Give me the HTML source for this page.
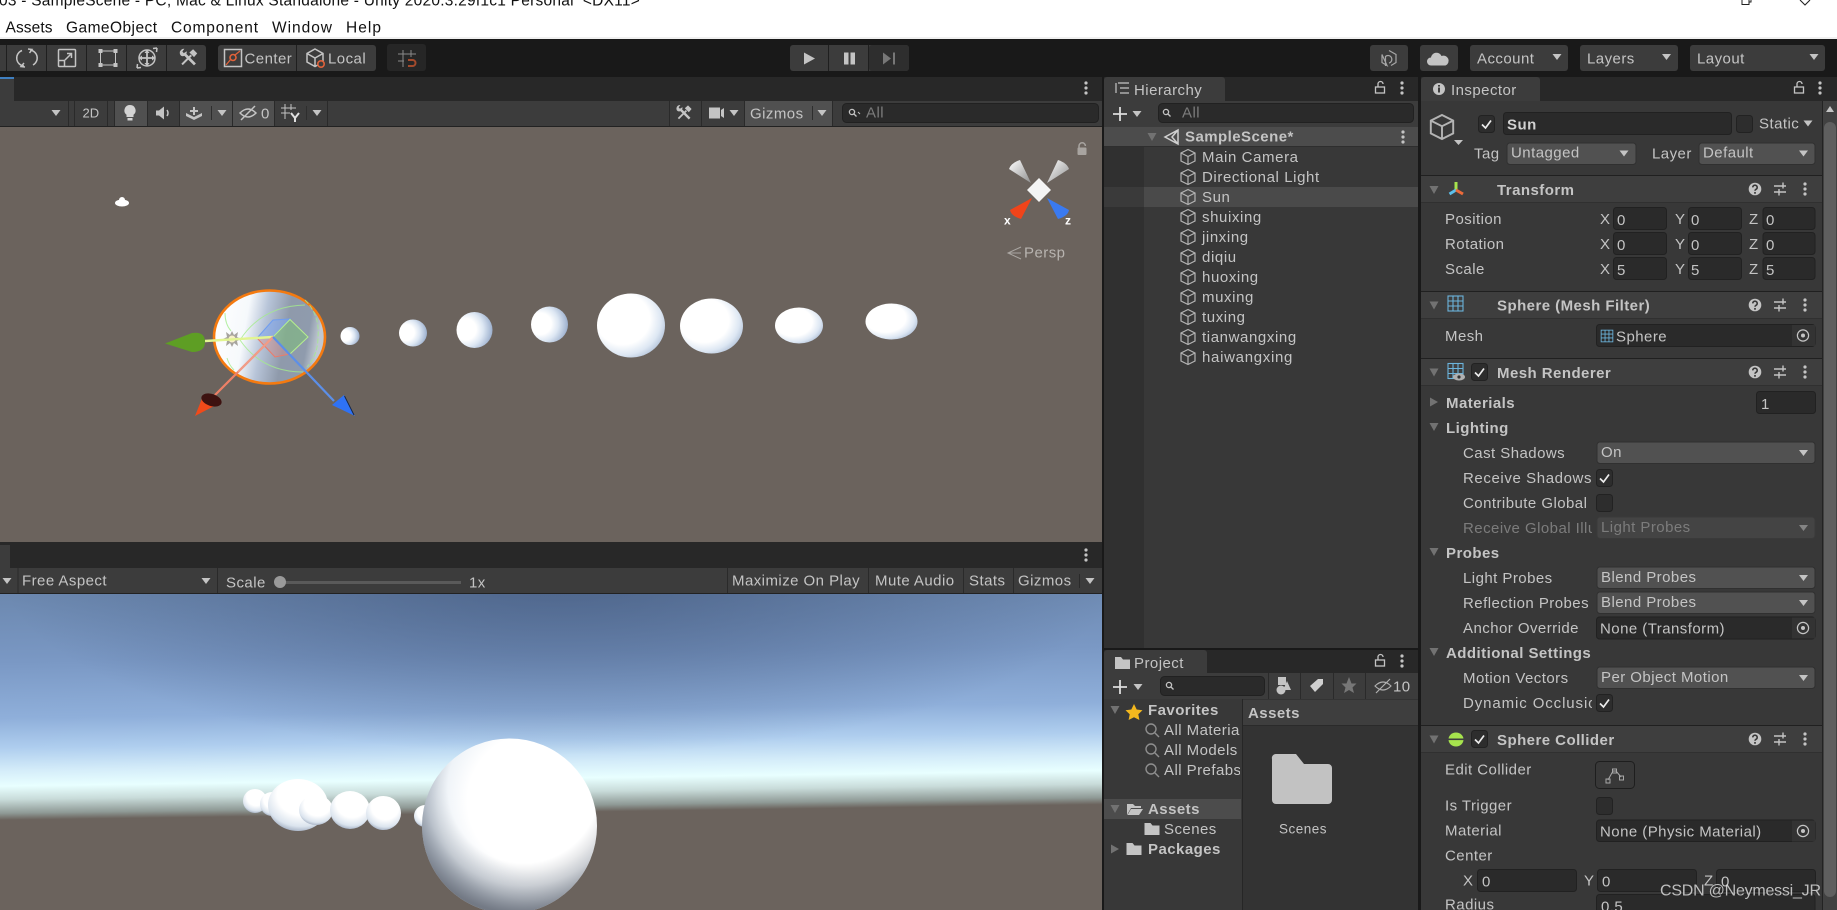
<!DOCTYPE html>
<html><head><meta charset="utf-8"><title>Unity</title>
<style>
html,body{margin:0;padding:0;background:#191919;overflow:hidden;width:1837px;height:910px}
svg{display:block;position:absolute;left:0;top:0}
text{font-family:"Liberation Sans",sans-serif;font-size:15px;letter-spacing:.45px;fill:#c4c4c4;white-space:pre;transform:translateY(-.5px)}
.b{font-weight:bold}
.dim{fill:#7c7c7c}
.blk{fill:#111;letter-spacing:0;font-size:15.5px}
.f{fill:#2a2a2a;stroke:#212121}
.d{fill:#515151;stroke:#303030}
.s{fill:none;stroke:#c4c4c4;stroke-width:1.5}
.sep{fill:#262626}
</style></head><body>
<svg width="1837" height="910" viewBox="0 0 1837 910" xmlns="http://www.w3.org/2000/svg">
<defs>
<clipPath id="lab"><rect x="1400" y="380" width="192" height="340"/></clipPath>
<clipPath id="lc"><rect x="1104" y="700" width="136" height="90"/></clipPath>
<linearGradient id="sky" gradientUnits="userSpaceOnUse" x1="0" y1="594" x2="3.2" y2="820">
<stop offset="0" stop-color="#6c88af"/><stop offset=".3" stop-color="#7a98c4"/><stop offset=".55" stop-color="#8fafda"/><stop offset=".68" stop-color="#aecdee"/><stop offset=".78" stop-color="#d4ecf9"/><stop offset=".85" stop-color="#e8ffff"/><stop offset=".91" stop-color="#c8dbd9"/><stop offset=".97" stop-color="#8f9a96"/><stop offset="1" stop-color="#6b635d"/>
</linearGradient>
<radialGradient id="dark" gradientUnits="userSpaceOnUse" cx="560" cy="570" r="560" gradientTransform="translate(560 570) scale(1 .33) translate(-560 -570)">
<stop offset="0" stop-color="#3e5378" stop-opacity=".7"/><stop offset="1" stop-color="#3e5378" stop-opacity="0"/>
</radialGradient>
<radialGradient id="big" cx=".65" cy=".36" r=".78">
<stop offset="0" stop-color="#fff"/><stop offset=".5" stop-color="#fff"/><stop offset=".72" stop-color="#eaf0f6"/><stop offset=".88" stop-color="#c4d0de"/><stop offset="1" stop-color="#98a4b4"/>
</radialGradient>
<radialGradient id="bigb" cx=".58" cy=".28" r=".72">
<stop offset=".6" stop-color="#6f7580" stop-opacity="0"/><stop offset=".78" stop-color="#6f7580" stop-opacity=".32"/><stop offset="1" stop-color="#6f7580" stop-opacity=".95"/>
</radialGradient>
<radialGradient id="gs" cx=".55" cy=".3" r=".72">
<stop offset="0" stop-color="#fff"/><stop offset=".55" stop-color="#fff"/><stop offset=".85" stop-color="#dbe4ee"/><stop offset="1" stop-color="#a3afc2"/>
</radialGradient>
<radialGradient id="ss" cx=".25" cy=".48" r=".85">
<stop offset="0" stop-color="#fff"/><stop offset=".35" stop-color="#fff"/><stop offset=".58" stop-color="#dde7f3"/><stop offset=".8" stop-color="#aebfd8"/><stop offset="1" stop-color="#7f96bb"/>
</radialGradient>
<radialGradient id="sl2" cx=".38" cy=".4" r=".72">
<stop offset="0" stop-color="#fff"/><stop offset=".55" stop-color="#fff"/><stop offset=".78" stop-color="#dde7f3"/><stop offset="1" stop-color="#a4b6d0"/>
</radialGradient>
<linearGradient id="sun" x1="0" y1="0" x2="1" y2=".15">
<stop offset="0" stop-color="#fff"/><stop offset=".33" stop-color="#f6f9fc"/><stop offset=".5" stop-color="#b7c4d8"/><stop offset=".7" stop-color="#8f9aab"/><stop offset=".9" stop-color="#8f9bad"/><stop offset="1" stop-color="#c0c8d2"/>
</linearGradient>
<linearGradient id="cw" x1="0" y1="0" x2="1" y2="1"><stop offset="0" stop-color="#fff"/><stop offset="1" stop-color="#8f8f8f"/></linearGradient>
<g id="dn"><path d="M-4.5 -3H4.5L0 3Z" fill="#c4c4c4"/></g>
<g id="fo"><path d="M-4.5 -4H4.5L0 4Z" fill="#727272"/></g>
<g id="fr"><path d="M-4 -4.5L4 0L-4 4.5Z" fill="#727272"/></g>
<g id="dots" fill="#c4c4c4"><circle cy="-5" r="1.6"/><circle r="1.6"/><circle cy="5" r="1.6"/></g>
<g id="help"><circle r="6.3" fill="#c4c4c4"/><path d="M-2.2 -1.6a2.2 2.2 0 1 1 3.4 1.8c-.8.5-1.2.9-1.2 1.5" fill="none" stroke="#383838" stroke-width="1.6"/><circle cy="3.9" r="1" fill="#383838"/></g>
<g id="sl" fill="none" stroke="#c4c4c4" stroke-width="1.4"><path d="M-6 -3H6M3 -6.5V-.5M-6 3H6M-1 0V6.5"/></g>
<g id="hd"><use href="#help" x="0"/><use href="#sl" x="25"/><use href="#dots" x="50"/></g>
<g id="box"><rect x=".5" y=".5" width="16" height="17" rx="3" fill="#2d2d2d" stroke="#222"/></g>
<g id="chk"><use href="#box"/><path d="M4 9.5L7.5 13L13 5.5" fill="none" stroke="#ececec" stroke-width="1.7"/></g>
<g id="tg"><rect x="-11" y="-10.5" width="23" height="21" fill="#333"/><circle r="5.6" fill="none" stroke="#c4c4c4" stroke-width="1.2"/><circle r="2" fill="#c4c4c4"/></g>
<g id="lock" fill="none" stroke="#c4c4c4" stroke-width="1.3"><rect x="-4.5" y="-1" width="9" height="6"/><path d="M-2 -1V-4a2.5 2.5 0 0 1 5 0"/></g>
<g id="cube" fill="none" stroke="#b4b4b4" stroke-width="1.2"><path d="M0 -7.5L7 -4V4L0 7.5L-7 4V-4ZM-7 -4L0 -.5L7 -4M0 -.5V7.5"/></g>
<g id="srch" fill="none" stroke="#c4c4c4" stroke-width="1.3"><circle cx="-1" cy="-1" r="2.6"/><path d="M1 1L3.5 3.5"/></g>
<g id="msrch" fill="none" stroke="#8e8e8e" stroke-width="1.4"><circle cx="-1" cy="-1" r="5"/><path d="M3 3L7 7"/></g>
<g id="grid" fill="none" stroke="#6cb4dc" stroke-width="1.1"><rect x="-7.5" y="-7.5" width="15" height="15"/><path d="M-2.5 -7.5V7.5M2.5 -7.5V7.5M-7.5 -2.5H7.5M-7.5 2.5H7.5"/></g>
<g id="fld"><path d="M-7.5 -6H-1.5L.5 -3.5H7.5V6H-7.5Z" fill="#c4c4c4"/></g>
<g id="wr"><path d="M-5 -5L7 7" stroke="#c4c4c4" stroke-width="3" fill="none"/><path d="M-9.5 -5.5a4.5 4.5 0 0 1 5-4.5l-2.2 3 1.7 1.8 3-2.2a4.5 4.5 0 0 1-5 5.4a4 4 0 0 1-2.5-3.5Z" fill="#c4c4c4"/><path d="M-7 7L3 -3" stroke="#c4c4c4" stroke-width="2.2" fill="none"/><path d="M1 -6L5 -9.5L9.5 -5L6 -1Z" fill="#c4c4c4"/></g>
</defs>

<!-- window chrome -->
<rect width="1837" height="38" fill="#fff"/><rect y="37" width="1837" height="2" fill="#f0f0f0"/>
<text x="-1" y="6" style="fill:#111;font-size:15.5px;letter-spacing:.2px" textLength="641" lengthAdjust="spacing">03 - SampleScene - PC, Mac &amp; Linux Standalone - Unity 2020.3.29f1c1 Personal  &lt;DX11&gt;</text>
<text x="5.5" y="33" class="blk" textLength="47" lengthAdjust="spacing">Assets</text><text x="66" y="33" class="blk" textLength="91" lengthAdjust="spacing">GameObject</text><text x="171" y="33" class="blk" textLength="87" lengthAdjust="spacing">Component</text><text x="272" y="33" class="blk" textLength="60" lengthAdjust="spacing">Window</text><text x="346" y="33" class="blk" textLength="35" lengthAdjust="spacing">Help</text>
<path d="M1742 0V4.5H1749V0M1749 2H1751V0" fill="none" stroke="#222" stroke-width="1"/><path d="M1800 0L1805 5L1810 0" fill="none" stroke="#222" stroke-width="1.1"/>

<!-- main toolbar -->
<rect y="39" width="1837" height="38" fill="#191919"/>
<rect x="-4" y="45" width="210" height="26" rx="3" fill="#3c3c3c"/>
<path d="M6.5 45V71M46.5 45V71M86.5 45V71M126.5 45V71M166.5 45V71" stroke="#1f1f1f"/>
<path d="M22 50.5A8 8 0 0 0 24 66M30 50A8 8 0 0 1 33 65M28 49L32 49.5L29.5 53M25 67L21 66.5L24 63" class="s"/>
<rect x="58.5" y="49.5" width="17" height="17" rx="1" class="s"/><path d="M58.5 60.5H64.5V66.5M65 60L71.5 53.5M67 53.5H71.5V58" class="s"/>
<rect x="100.5" y="51" width="15" height="14" fill="none" stroke="#c4c4c4"/><g fill="#c4c4c4"><rect x="98.5" y="49" width="4" height="4"/><rect x="113.5" y="49" width="4" height="4"/><rect x="98.5" y="63" width="4" height="4"/><rect x="113.5" y="63" width="4" height="4"/></g>
<circle cx="147" cy="58" r="8" class="s" stroke-width="1.2"/><path d="M147 52V64M141 58H153" stroke="#c4c4c4" stroke-width="1.8"/><path d="M147 49.5L149.5 53H144.5ZM147 66.5L149.5 63H144.5ZM138.5 58L142 55.5V60.5ZM155.5 58L152 55.5V60.5Z" fill="#c4c4c4"/><path d="M137 68L141 67.5M137 68L137.5 64M157 48L153 48.5M157 48L156.5 52" class="s" stroke-width="1.2"/>
<g transform="translate(188.5 58) scale(.92)"><use href="#wr"/></g>
<rect x="218" y="45" width="158" height="26" rx="3" fill="#3c3c3c"/><path d="M296.5 45V71" stroke="#1f1f1f"/>
<rect x="224.5" y="49.5" width="17" height="17" class="s" stroke-width="1"/><path d="M226 65L231 59M235 55L240 51" stroke="#e0623a" stroke-width="1.3"/><circle cx="233" cy="57.5" r="3" fill="none" stroke="#e0623a" stroke-width="1.6"/>
<text x="244.5" y="64">Center</text>
<path d="M315 49L323 53.5V62L315 66.5L307 62V53.5ZM307 53.5L315 58L323 53.5M315 58V66.5" class="s" stroke-width="1.1"/><circle cx="321" cy="64" r="3.2" fill="#3c3c3c" stroke="#e0623a" stroke-width="1.6"/>
<text x="328" y="64">Local</text>
<rect x="387" y="44" width="39" height="27" rx="3" fill="#262626"/>
<path d="M398 54H416M398 61H404M403 50V67M411 50V57" stroke="#8a8a8a" fill="none"/><path d="M408 60H412.5a3 3 0 0 1 0 6H408" fill="none" stroke="#a34a2c" stroke-width="2"/>
<rect x="790" y="45" width="119" height="26" rx="3" fill="#3c3c3c"/><rect x="869" y="45" width="40" height="26" rx="3" fill="#2e2e2e"/><path d="M828.5 45V71M868.5 45V71" stroke="#1f1f1f"/>
<path d="M804 52.5L815 58.5L804 64.5Z" fill="#c4c4c4"/><rect x="844" y="52.5" width="4.5" height="12" fill="#c4c4c4"/><rect x="850.5" y="52.5" width="4.5" height="12" fill="#c4c4c4"/>
<path d="M883 52.5L891 58.5L883 64.5Z" fill="#777"/><rect x="893" y="52.5" width="2" height="12" fill="#777"/>
<rect x="1370" y="45" width="38" height="26" rx="3" fill="#3c3c3c"/><rect x="1420" y="45" width="38" height="26" rx="3" fill="#3c3c3c"/>
<path d="M1389 50.5L1396 54.5V62.5L1391 65.5M1387 65.5L1382 62.5V54.5ZM1385.5 66V56.5A3.8 3.8 0 1 1 1389 63" fill="none" stroke="#a6a6a6" stroke-width="1.2"/>
<path d="M1431 65.5a4 4 0 0 1 0-8 5.5 5.5 0 0 1 10.5-1.5 4.8 4.8 0 0 1 4 9.5Z" fill="#c4c4c4"/>
<rect x="1470" y="45" width="98" height="26" rx="3" fill="#3c3c3c"/><rect x="1580" y="45" width="98" height="26" rx="3" fill="#3c3c3c"/><rect x="1690" y="45" width="135" height="26" rx="3" fill="#3c3c3c"/>
<text x="1477" y="64">Account</text><use href="#dn" x="1557" y="57"/><text x="1587" y="64">Layers</text><use href="#dn" x="1666.5" y="57"/><text x="1697" y="64">Layout</text><use href="#dn" x="1814" y="57"/>

<!-- scene panel -->
<rect y="77" width="1102" height="24" fill="#282828"/><rect width="14" y="79" height="22" fill="#3c3c3c"/><rect y="77" width="14" height="2" fill="#3f7fc0"/>
<use href="#dots" x="1086" y="88"/>
<rect y="101" width="1102" height="26" fill="#3c3c3c"/><rect y="126" width="1102" height="1" fill="#222"/>
<use href="#dn" x="56" y="113"/>
<path d="M68.5 101V126M74.5 101V126M107.5 101V126M114.5 101V126M147.5 101V126M179.5 101V126M232.5 101V126M274.5 101V126M327.5 101V126" stroke="#2a2a2a"/>
<text x="82.5" y="118" style="font-size:13px;letter-spacing:0">2D</text>
<rect x="115" y="101" width="32" height="25" fill="#505050"/><rect x="180" y="101" width="52" height="25" fill="#505050"/><rect x="233" y="101" width="41" height="25" fill="#505050"/>
<path d="M130 105a5.5 5.5 0 0 1 3.5 9.8V117h-7v-2.2A5.5 5.5 0 0 1 130 105Z" fill="#d4d4d4"/><rect x="127.5" y="118" width="5" height="2.5" fill="#d4d4d4"/>
<path d="M156 110.5H159L164 106.5V119.5L159 115.5H156Z" fill="#c4c4c4"/><path d="M167 110Q169 113 167 116" class="s" stroke-width="1"/>
<path d="M186 113L194 117L202 113V116L194 120L186 116Z" fill="#c4c4c4"/><path d="M194 107V115M190 111H198" stroke="#c4c4c4" stroke-width="2"/><path d="M211.5 106V120" stroke="#2e2e2e"/><use href="#dn" x="222" y="113"/>
<path d="M240 113Q248 105 256 113Q248 121 240 113ZM241 120L255 106" class="s" stroke-width="1.2"/>
<text x="261" y="119">0</text>
<path d="M281 108H296M281 113H290M285 104V119M291 104V110" fill="none" stroke="#c4c4c4"/><path d="M291 113L295 118V122M299 113L295 118" stroke="#e0e0e0" stroke-width="2" fill="none"/>
<path d="M306.5 106V120" stroke="#2e2e2e"/><use href="#dn" x="317" y="113"/>
<path d="M669.5 101V126M701.5 101V126M744.5 101V126M832.5 101V126" stroke="#2a2a2a"/>
<g transform="translate(684 113) scale(.8)"><use href="#wr"/></g>
<rect x="709" y="107.5" width="11" height="11" fill="#c4c4c4"/><path d="M721 110L724 108V118L721 116Z" fill="#c4c4c4"/><use href="#dn" x="734" y="113"/>
<rect x="745" y="101" width="87" height="25" fill="#505050"/><text x="750" y="119">Gizmos</text><path d="M812.5 106V120" stroke="#2e2e2e"/><use href="#dn" x="822" y="113"/>
<rect x="842.5" y="103.5" width="256" height="19" rx="4" class="f"/><use href="#srch" x="853" y="113"/><path d="M858 112L860 114" stroke="#c4c4c4"/><text x="866" y="118" class="dim">All</text>

<!-- scene view -->
<rect y="127" width="1102" height="415" fill="#6b635d"/>
<g fill="#fff"><ellipse cx="122" cy="203" rx="7" ry="3.5"/><circle cx="122" cy="200" r="3"/></g>
<ellipse cx="350" cy="336" rx="9.5" ry="9" fill="url(#ss)"/>
<ellipse cx="413" cy="333" rx="14" ry="13.5" fill="url(#ss)"/>
<ellipse cx="474.5" cy="330" rx="18" ry="18" fill="url(#ss)"/>
<ellipse cx="549.5" cy="324.5" rx="18.5" ry="18" fill="url(#ss)"/>
<ellipse cx="631" cy="325.5" rx="34" ry="32" fill="url(#sl2)"/>
<ellipse cx="711.5" cy="326" rx="31.5" ry="27.5" fill="url(#sl2)"/>
<ellipse cx="799" cy="325.5" rx="24" ry="18" fill="url(#sl2)"/>
<ellipse cx="891.5" cy="321.5" rx="26" ry="18" fill="url(#sl2)"/>
<ellipse cx="269.5" cy="337" rx="55.5" ry="46.5" fill="url(#sun)" stroke="#f47a10" stroke-width="2.6"/>
<g fill="none" stroke="#a4ec8c" stroke-width="1" opacity=".8"><path d="M225 313Q225 324 231 331M227 358Q229 365 234 370"/><path d="M240 340Q262 306 305 305M240 340Q262 372 303 372"/><path d="M305 300Q320 315 318 337Q318 355 307 367" stroke-dasharray="5 2"/></g>
<path d="M273 320L290 319L273 337L257 338Z" fill="#7da6f0" fill-opacity=".55" stroke="#6f9df0"/>
<path d="M290 319.5L308 337L290 354L273 337Z" fill="#7ebd7a" fill-opacity=".55" stroke="#b6ef8e"/>
<path d="M257 338L273 337L290 354L275 357Z" fill="#e88a80" fill-opacity=".35" stroke="#ee7a68"/>
<path d="M232 331L234 335L238 332L237 337L241 339L237 341L238 346L234 343L232 347L230 343L226 346L227 341L223 339L227 337L226 332L230 335Z" fill="#a7a49e"/><circle cx="232" cy="339" r="3.5" fill="#f6f0c8"/>
<path d="M205 341L273 337" stroke="#e2f592" stroke-width="2.4"/>
<path d="M165 343.5L192 333Q205 331 205 342Q205 352 192 352Z" fill="#5e9e24"/>
<path d="M273 337L213 397" stroke="#ee8066" stroke-width="2.2"/><path d="M273 337L238 372" stroke="#f09c88" stroke-width="2.2"/>
<path d="M195 416L203 396L220 403Z" fill="#f04a1a"/><ellipse cx="211.5" cy="400" rx="10.5" ry="6" transform="rotate(18 211.5 400)" fill="#3d1210"/>
<path d="M273 337L334 401" stroke="#5c8fe8" stroke-width="2.2"/>
<path d="M355 416L332 405L344 395Z" fill="#2f72f4"/><path d="M344.5 396L354 415" stroke="#16233f" stroke-width=".9"/>
<!-- view gizmo -->
<path d="M1039 178L1051 190L1039 202L1027 190Z" fill="#f4f4f4"/>
<path d="M1031 183L1009 169Q1011 163 1020 160Z" fill="url(#cw)"/>
<path d="M1047 183L1069 169Q1067 163 1058 160Z" fill="url(#cw)"/>
<path d="M1032 198L1021 219Q1011 216 1010 210Z" fill="#f0441a"/>
<path d="M1047 198L1058 219Q1068 216 1069 210Z" fill="#3a7af0"/>
<text x="1004" y="225" class="b" style="font-size:12px;fill:#fff;letter-spacing:0">x</text><text x="1065" y="225" class="b" style="font-size:12px;fill:#fff;letter-spacing:0">z</text>
<path d="M1021 247L1008 253L1021 259M1008 253H1021" fill="none" stroke="#aaa6a2"/><text x="1024" y="258" style="fill:#b8b4b0">Persp</text>
<rect x="1077.5" y="147.5" width="9" height="7.5" rx="1" fill="#a8a4a0"/><path d="M1079 147.5V146a3.2 3.2 0 0 1 6.4 0" fill="none" stroke="#a8a4a0" stroke-width="1.5"/>

<!-- game panel -->
<rect y="542" width="1102" height="26" fill="#282828"/><rect y="545" width="10" height="23" fill="#3c3c3c"/><use href="#dots" x="1086" y="555"/>
<rect y="568" width="1102" height="25" fill="#3c3c3c"/><rect y="593" width="1102" height="1" fill="#222"/>
<use href="#dn" x="7" y="581"/><path d="M18 568V593M217.5 568V593M727.5 568V593M868.5 568V593M963.5 568V593M1013.5 568V593" stroke="#2a2a2a"/>
<text x="22" y="586">Free Aspect</text><use href="#dn" x="206" y="581"/>
<text x="226" y="588">Scale</text><rect x="284" y="581" width="177" height="3" fill="#5a5a5a"/><ellipse cx="280" cy="582" rx="6" ry="6" fill="#9a9a9a"/><text x="469" y="588">1x</text>
<text x="732" y="586">Maximize On Play</text><text x="875" y="586">Mute Audio</text><text x="969" y="586">Stats</text><text x="1018" y="586">Gizmos</text><path d="M1079.5 574V588" stroke="#2a2a2a"/><use href="#dn" x="1090" y="581"/>
<rect y="594" width="1102" height="316" fill="url(#sky)"/>
<rect y="594" width="1102" height="180" fill="url(#dark)"/>
<circle cx="255" cy="801" r="12" fill="url(#gs)"/><circle cx="272" cy="804" r="12" fill="url(#gs)"/>
<ellipse cx="298" cy="805" rx="30" ry="26" fill="url(#gs)"/><ellipse cx="316" cy="810" rx="17" ry="15" fill="url(#gs)"/>
<ellipse cx="350" cy="810" rx="20" ry="19" fill="url(#gs)"/><ellipse cx="383.5" cy="813" rx="17.5" ry="17" fill="url(#gs)"/><circle cx="425" cy="816" r="11" fill="url(#gs)"/>
<circle cx="509.5" cy="826" r="87.5" fill="url(#big)"/><circle cx="509.5" cy="826" r="87.5" fill="url(#bigb)"/>

<!-- hierarchy -->
<rect x="1104" y="77" width="314" height="24" fill="#282828"/><path d="M1104 101V80a3 3 0 0 1 3-3H1222a3 3 0 0 1 3 3V101Z" fill="#3c3c3c"/>
<path d="M1118 83H1129M1120 88H1129M1120 93H1129M1116 83V93" fill="none" stroke="#c4c4c4" stroke-width="1.2"/>
<text x="1134" y="95.5">Hierarchy</text><use href="#lock" x="1380" y="88"/><use href="#dots" x="1402" y="88"/>
<rect x="1104" y="101" width="314" height="26" fill="#3c3c3c"/>
<path d="M1120 107V121M1113 114H1127" stroke="#dcdcdc" stroke-width="1.8"/><use href="#dn" x="1137" y="114"/>
<rect x="1158.5" y="103.5" width="255" height="19" rx="4" class="f"/><use href="#srch" x="1167" y="113"/><text x="1182" y="118" class="dim">All</text>
<rect x="1104" y="127" width="314" height="521" fill="#383838"/><rect x="1104" y="146" width="40" height="502" fill="#303030"/>
<rect x="1104" y="127" width="314" height="19.5" fill="#4c4c4c"/><rect x="1104" y="146" width="314" height="1" fill="#2e2e2e"/>
<use href="#fo" x="1152" y="137"/><path d="M1178 130V144L1165 137ZM1178 130L1172 137L1178 144" fill="none" stroke="#d0d0d0" stroke-width="1.5"/>
<text x="1185" y="142" class="b">SampleScene*</text><use href="#dots" x="1403" y="137"/>
<rect x="1104" y="187" width="40" height="20" fill="#3a3a3a"/><rect x="1144" y="187" width="274" height="20" fill="#4a4a4a"/>
<use href="#cube" x="1188" y="157"/><text x="1202" y="162.5" style="letter-spacing:.6px">Main Camera</text>
<use href="#cube" x="1188" y="177"/><text x="1202" y="182.5" style="letter-spacing:.6px">Directional Light</text>
<use href="#cube" x="1188" y="197"/><text x="1202" y="202.5" style="letter-spacing:.6px">Sun</text>
<use href="#cube" x="1188" y="217"/><text x="1202" y="222.5" style="letter-spacing:.6px">shuixing</text>
<use href="#cube" x="1188" y="237"/><text x="1202" y="242.5" style="letter-spacing:.6px">jinxing</text>
<use href="#cube" x="1188" y="257"/><text x="1202" y="262.5" style="letter-spacing:.6px">diqiu</text>
<use href="#cube" x="1188" y="277"/><text x="1202" y="282.5" style="letter-spacing:.6px">huoxing</text>
<use href="#cube" x="1188" y="297"/><text x="1202" y="302.5" style="letter-spacing:.6px">muxing</text>
<use href="#cube" x="1188" y="317"/><text x="1202" y="322.5" style="letter-spacing:.6px">tuxing</text>
<use href="#cube" x="1188" y="337"/><text x="1202" y="342.5" style="letter-spacing:.6px">tianwangxing</text>
<use href="#cube" x="1188" y="357"/><text x="1202" y="362.5" style="letter-spacing:.7px">haiwangxing</text>

<!-- project -->
<rect x="1104" y="650" width="314" height="23" fill="#282828"/><path d="M1104 673V653a3 3 0 0 1 3-3H1204a3 3 0 0 1 3 3V673Z" fill="#3c3c3c"/>
<use href="#fld" x="1122.5" y="663"/><text x="1134" y="668.5">Project</text><use href="#lock" x="1380" y="661"/><use href="#dots" x="1402" y="661"/>
<rect x="1104" y="673" width="314" height="26" fill="#3c3c3c"/><rect x="1104" y="699" width="314" height="1" fill="#2a2a2a"/>
<path d="M1120 680V694M1113 687H1127" stroke="#dcdcdc" stroke-width="1.8"/><use href="#dn" x="1138" y="687"/>
<rect x="1160.5" y="676.5" width="104" height="19" rx="4" class="f"/><use href="#srch" x="1170" y="686"/>
<path d="M1268.5 673V699M1300.5 673V699M1333.5 673V699M1365.5 673V699" stroke="#2a2a2a"/>
<circle cx="1281" cy="690" r="4.5" fill="#c4c4c4"/><rect x="1278" y="677" width="8" height="8" fill="#c4c4c4"/><path d="M1287 681L1291 690H1283Z" fill="#c4c4c4"/>
<path d="M1310 686L1318 679H1323V684L1315 692Z" fill="#d0d0d0"/>
<path d="M1349 677L1351.5 683.5H1356.5L1352.5 687.5L1354 693L1349 690L1344 693L1345.5 687.5L1341.5 683.5H1346.5Z" fill="#777"/>
<path d="M1375 686Q1383 678 1391 686Q1383 694 1375 686ZM1376 693L1390 679" fill="none" stroke="#b0b0b0" stroke-width="1.2"/><text x="1393" y="692">10</text>
<rect x="1104" y="699" width="138" height="211" fill="#383838"/><rect x="1242" y="699" width="1" height="211" fill="#262626"/><rect x="1243" y="699" width="175" height="211" fill="#333"/>
<rect x="1243" y="700" width="175" height="25" fill="#3e3e3e"/><rect x="1243" y="725" width="175" height="1" fill="#2a2a2a"/>
<rect x="1104" y="799" width="137" height="20" fill="#4c4c4c"/>
<use href="#fo" x="1115" y="710"/><path d="M1134 704L1136.7 709.5L1142.5 710.3L1138.3 714.2L1139.4 720L1134 717.3L1128.6 720L1129.7 714.2L1125.5 710.3L1131.3 709.5Z" fill="#f4b81e"/>
<text x="1148" y="715.5" class="b">Favorites</text>
<use href="#msrch" x="1152" y="730"/><use href="#msrch" x="1152" y="750"/><use href="#msrch" x="1152" y="770"/>
<g clip-path="url(#lc)"><text x="1164" y="735.5">All Materials</text><text x="1164" y="755.5">All Models</text><text x="1164" y="775.5">All Prefabs</text></g>
<use href="#fo" x="1115" y="809"/><path d="M1127 815V804H1133L1135 806H1141V808H1131L1127 815ZM1127.5 815L1131 809H1143L1139 815Z" fill="#c4c4c4"/><text x="1148" y="814.5" class="b">Assets</text>
<use href="#fld" x="1152" y="829"/><text x="1164" y="834.5">Scenes</text>
<use href="#fr" x="1115" y="849"/><use href="#fld" x="1134" y="849"/><text x="1148" y="854.5" class="b">Packages</text>
<text x="1248" y="718.5" class="b">Assets</text>
<path d="M1272 759a4 4 0 0 1 4-5H1296L1304 764H1328a4 4 0 0 1 4 4V800a4 4 0 0 1-4 4H1276a4 4 0 0 1-4-4Z" fill="#c2c2c2"/>
<text x="1279" y="834" style="font-size:13.5px;letter-spacing:.5px">Scenes</text>

<!-- inspector -->
<rect x="1421" y="77" width="416" height="24" fill="#282828"/><path d="M1421 101V80a3 3 0 0 1 3-3H1537a3 3 0 0 1 3 3V101Z" fill="#3c3c3c"/>
<circle cx="1439" cy="89" r="6" fill="#c4c4c4"/><rect x="1438" y="87.5" width="2" height="5" fill="#3c3c3c"/><rect x="1438" y="85" width="2" height="1.6" fill="#3c3c3c"/>
<text x="1451" y="95.5">Inspector</text><use href="#lock" x="1799" y="88"/><use href="#dots" x="1820" y="88"/>
<rect x="1421" y="101" width="401" height="809" fill="#383838"/>
<rect x="1822" y="101" width="1" height="809" fill="#232323"/><rect x="1823" y="101" width="14" height="809" fill="#414141"/>
<path d="M1830 106L1834 112H1826Z" fill="#c4c4c4"/><rect x="1824" y="122" width="12" height="775" rx="6" fill="#5f5f5f"/>
<g transform="translate(1442 127) scale(1.6)"><use href="#cube"/></g><path d="M1454 140H1463L1458.5 145Z" fill="#c4c4c4"/>
<use href="#chk" x="1478" y="115"/><rect x="1503.5" y="112.5" width="228" height="22" rx="3" class="f"/><text x="1507" y="130" class="b" style="fill:#d2d2d2">Sun</text>
<use href="#box" x="1736" y="115"/><text x="1759" y="129">Static</text><use href="#dn" x="1808" y="123.5"/>
<text x="1474" y="159">Tag</text><rect x="1507" y="143" width="129" height="21.5" rx="3" class="d"/><text x="1511" y="158">Untagged</text><use href="#dn" x="1624" y="153.5"/>
<text x="1652" y="159">Layer</text><rect x="1699" y="143" width="116" height="21.5" rx="3" class="d"/><text x="1703" y="158">Default</text><use href="#dn" x="1803.5" y="153.5"/>

<!-- transform -->
<rect x="1421" y="175" width="401" height="1" fill="#202020"/><rect x="1421" y="176" width="401" height="26" fill="#3e3e3e"/><rect x="1421" y="202" width="401" height="1" fill="#303030"/>
<use href="#fo" x="1434" y="190"/>
<path d="M1456 182V190" stroke="#a6e34d" stroke-width="3"/><path d="M1456 190L1449.5 194" stroke="#5cc0ec" stroke-width="3"/><path d="M1456 190L1463 194" stroke="#ec6a3a" stroke-width="3"/>
<text x="1497" y="195.5" class="b">Transform</text><use href="#hd" x="1755" y="189"/>
<text x="1445" y="224.5">Position</text><text x="1445" y="249.5">Rotation</text><text x="1445" y="274.5">Scale</text>
<text x="1600" y="224.5">X</text><text x="1675" y="224.5">Y</text><text x="1749" y="224.5">Z</text>
<text x="1600" y="249.5">X</text><text x="1675" y="249.5">Y</text><text x="1749" y="249.5">Z</text>
<text x="1600" y="274.5">X</text><text x="1675" y="274.5">Y</text><text x="1749" y="274.5">Z</text>
<rect x="1613.5" y="207.5" width="53" height="22" rx="3" class="f"/><rect x="1688.5" y="207.5" width="53" height="22" rx="3" class="f"/><rect x="1763" y="207.5" width="52" height="22" rx="3" class="f"/>
<rect x="1613.5" y="232.5" width="53" height="22" rx="3" class="f"/><rect x="1688.5" y="232.5" width="53" height="22" rx="3" class="f"/><rect x="1763" y="232.5" width="52" height="22" rx="3" class="f"/>
<rect x="1613.5" y="257.5" width="53" height="22" rx="3" class="f"/><rect x="1688.5" y="257.5" width="53" height="22" rx="3" class="f"/><rect x="1763" y="257.5" width="52" height="22" rx="3" class="f"/>
<text x="1617" y="225.5">0</text><text x="1691" y="225.5">0</text><text x="1766" y="225.5">0</text>
<text x="1617" y="250.5">0</text><text x="1691" y="250.5">0</text><text x="1766" y="250.5">0</text>
<text x="1617" y="275.5">5</text><text x="1691" y="275.5">5</text><text x="1766" y="275.5">5</text>

<!-- mesh filter -->
<rect x="1421" y="291" width="401" height="1" fill="#202020"/><rect x="1421" y="292" width="401" height="26" fill="#3e3e3e"/><rect x="1421" y="318" width="401" height="1" fill="#303030"/>
<use href="#fo" x="1434" y="305.5"/><use href="#grid" x="1455.5" y="303.5"/><text x="1497" y="311" class="b">Sphere (Mesh Filter)</text><use href="#hd" x="1755" y="305"/>
<text x="1445" y="341.5">Mesh</text><rect x="1596.5" y="324.5" width="218.5" height="22" rx="3" class="f"/><g transform="translate(1607 336) scale(.78)"><use href="#grid"/></g><text x="1616" y="342">Sphere</text><use href="#tg" x="1803" y="335.5"/>

<!-- mesh renderer -->
<rect x="1421" y="358" width="401" height="1" fill="#202020"/><rect x="1421" y="359" width="401" height="26" fill="#3e3e3e"/><rect x="1421" y="385" width="401" height="1" fill="#303030"/>
<use href="#fo" x="1434" y="372.5"/><use href="#grid" x="1455.5" y="371"/><ellipse cx="1459" cy="377" rx="6" ry="3.5" fill="#b0b0b0"/><circle cx="1459" cy="377" r="1.6" fill="#333"/><use href="#chk" x="1471" y="363"/><text x="1497" y="378.5" class="b">Mesh Renderer</text><use href="#hd" x="1755" y="372"/>
<use href="#fr" x="1434" y="402"/><text x="1446" y="408.5" class="b">Materials</text><rect x="1756.5" y="391.5" width="59" height="22" rx="3" class="f"/><text x="1761" y="409.5">1</text>
<use href="#fo" x="1434" y="427"/><text x="1446" y="433.5" class="b">Lighting</text>
<g clip-path="url(#lab)">
<text x="1463" y="458.5">Cast Shadows</text><text x="1463" y="483.5" style="letter-spacing:.6px">Receive Shadows</text><text x="1463" y="508.5">Contribute Global Illumination</text><text x="1463" y="533.5" class="dim">Receive Global Illumination</text>
<text x="1463" y="583.5">Light Probes</text><text x="1463" y="608.5">Reflection Probes</text><text x="1463" y="633.5">Anchor Override</text>
<text x="1463" y="683.5">Motion Vectors</text><text x="1463" y="708.5" style="letter-spacing:.9px">Dynamic Occlusion</text>
</g>
<rect x="1597" y="442" width="218" height="21.5" rx="3" class="d"/><text x="1601" y="457.5">On</text><use href="#dn" x="1803.5" y="453"/>
<use href="#chk" x="1596" y="469"/><use href="#box" x="1596" y="494"/>
<rect x="1597" y="517" width="218" height="21.5" rx="3" fill="#444" stroke="#3a3a3a"/><text x="1601" y="532.5" class="dim">Light Probes</text><g opacity=".5"><use href="#dn" x="1803.5" y="528"/></g>
<use href="#fo" x="1434" y="552"/><text x="1446" y="558.5" class="b">Probes</text>
<rect x="1597" y="567" width="218" height="21.5" rx="3" class="d"/><text x="1601" y="582.5">Blend Probes</text><use href="#dn" x="1803.5" y="578"/>
<rect x="1597" y="592" width="218" height="21.5" rx="3" class="d"/><text x="1601" y="607.5">Blend Probes</text><use href="#dn" x="1803.5" y="603"/>
<rect x="1596.5" y="617" width="218.5" height="22" rx="3" class="f"/><text x="1600" y="634">None (Transform)</text><use href="#tg" x="1803" y="628"/>
<use href="#fo" x="1434" y="652"/><text x="1446" y="658.5" class="b">Additional Settings</text>
<rect x="1597" y="667" width="218" height="21.5" rx="3" class="d"/><text x="1601" y="682.5">Per Object Motion</text><use href="#dn" x="1803.5" y="678"/>
<use href="#chk" x="1596" y="694"/>

<!-- sphere collider -->
<rect x="1421" y="725" width="401" height="1" fill="#202020"/><rect x="1421" y="726" width="401" height="26" fill="#3e3e3e"/><rect x="1421" y="752" width="401" height="1" fill="#303030"/>
<use href="#fo" x="1434" y="739.5"/><ellipse cx="1456" cy="739.5" rx="7.5" ry="7" fill="#a6e34d"/><rect x="1448" y="738.5" width="16" height="1.6" fill="#3e3e3e"/><use href="#chk" x="1471" y="730"/>
<text x="1497" y="745.5" class="b">Sphere Collider</text><use href="#hd" x="1755" y="739"/>
<text x="1445" y="775">Edit Collider</text><rect x="1595.5" y="761.5" width="39" height="27" rx="4" fill="#383838" stroke="#1e1e1e"/>
<path d="M1608 780L1613 771H1616L1621 777" fill="none" stroke="#a8a8a8"/><rect x="1606" y="779" width="4" height="4" fill="none" stroke="#a8a8a8"/><rect x="1612.5" y="769" width="4" height="4" fill="none" stroke="#a8a8a8"/><rect x="1619.5" y="776" width="4" height="4" fill="none" stroke="#a8a8a8"/>
<text x="1445" y="811">Is Trigger</text><use href="#box" x="1596" y="797"/>
<text x="1445" y="836">Material</text><rect x="1596.5" y="820" width="218.5" height="21.5" rx="3" class="f"/><text x="1600" y="837">None (Physic Material)</text><use href="#tg" x="1803" y="831"/>
<text x="1445" y="861">Center</text>
<text x="1463" y="886">X</text><rect x="1477.5" y="869.5" width="99" height="22" rx="3" class="f"/><text x="1482" y="887">0</text>
<text x="1584" y="886">Y</text><rect x="1597.5" y="869.5" width="99" height="22" rx="3" class="f"/><text x="1602" y="887">0</text>
<text x="1704" y="886">Z</text><rect x="1716.5" y="869.5" width="99" height="22" rx="3" class="f"/><text x="1721" y="887">0</text>
<text x="1445" y="910">Radius</text><rect x="1596.5" y="894.5" width="218.5" height="22" rx="3" class="f"/><text x="1601" y="912">0.5</text>
<text x="1660" y="896" textLength="161" lengthAdjust="spacing" style="font-size:16px;fill:#d8d8d8;fill-opacity:.85;letter-spacing:0">CSDN @Neymessi_JR</text>
</svg>
</body></html>
